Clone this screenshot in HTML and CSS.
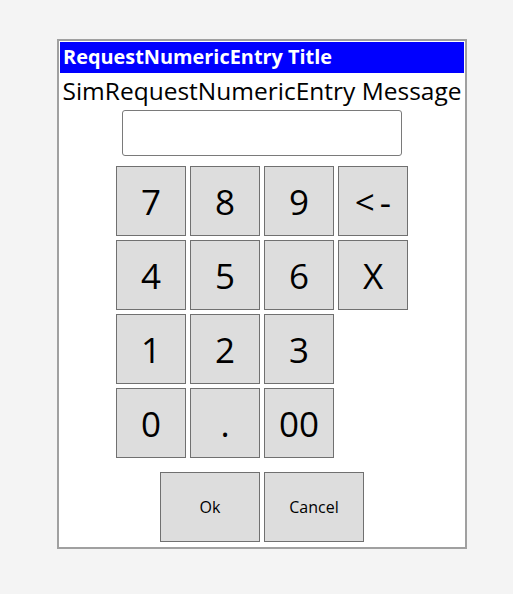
FILE: index.html
```html
<!DOCTYPE html>
<html>
<head>
<meta charset="utf-8">
<link rel="stylesheet" href="styles.css">
</head>
<body>
<div class="dialog">
  <div class="title">RequestNumericEntry Title</div>
  <div class="message">SimRequestNumericEntry Message</div>
  <div class="entry"></div>
  <div class="keypad">
    <button class="key">7</button>
    <button class="key">8</button>
    <button class="key">9</button>
    <button class="key key-back">&lt;-</button>
    <button class="key">4</button>
    <button class="key">5</button>
    <button class="key">6</button>
    <button class="key">X</button>
    <button class="key">1</button>
    <button class="key">2</button>
    <button class="key">3</button>
    <span class="blank"></span>
    <button class="key">0</button>
    <button class="key">.</button>
    <button class="key">00</button>
    <span class="blank"></span>
  </div>
  <div class="actions">
    <button class="action">Ok</button>
    <button class="action">Cancel</button>
  </div>
</div>
</body>
</html>
```
FILE: styles.css
```css
html, body {
  margin: 0;
  padding: 0;
  background: #f4f4f4;
}
body {
  padding: 39px 0 0 57px;
  font-family: "Open Sans", "Noto Sans", sans-serif;
}
.dialog {
  width: 404px;
  border: 2px solid #a0a0a0;
  padding: 1px;
  background: #fff;
  display: flex;
  flex-direction: column;
  align-items: center;
}
.title {
  align-self: stretch;
  height: 31px;
  background: #0000ff;
  color: #fff;
  font-weight: bold;
  font-size: 19.9px;
  line-height: 30px;
  padding-left: 3px;
  white-space: nowrap;
}
.message {
  height: 37px;
  line-height: 36px;
  font-size: 24.5px;
  color: #000;
  white-space: nowrap;
}
.entry {
  width: 278px;
  height: 44px;
  border: 1px solid #7a7a7a;
  border-radius: 3px;
  background: #fff;
}
.keypad {
  margin-top: 10px;
  display: grid;
  grid-template-columns: repeat(4, 70px);
  grid-auto-rows: 70px;
  gap: 4px;
}
.key, .action {
  margin: 0;
  padding: 0;
  background: #dddddd;
  border: 1px solid #707070;
  color: #000;
  font-family: "Open Sans", "Noto Sans", sans-serif;
}
.key {
  font-size: 35px;
}
.key-back {
  letter-spacing: 5px;
  text-indent: 5px;
}
.actions {
  margin-top: 14px;
  margin-bottom: 4px;
  display: flex;
  gap: 4px;
}
.action {
  width: 100px;
  height: 70px;
  font-size: 16px;
}
```
